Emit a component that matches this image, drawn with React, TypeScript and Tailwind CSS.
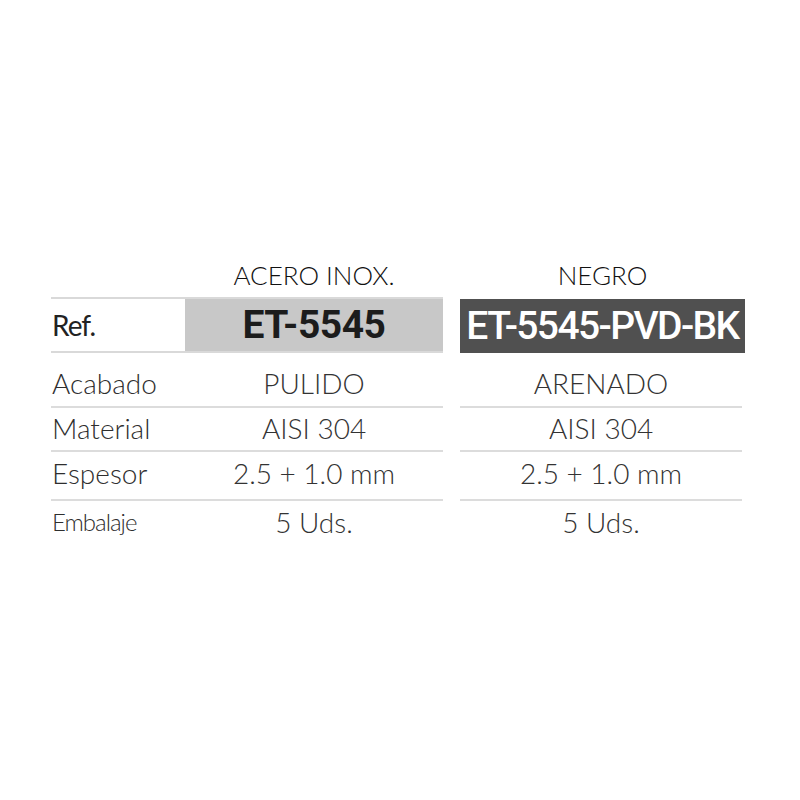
// Ficha técnica: dos columnas (ACERO INOX. / NEGRO) con filas de especificaciones

const rows = [
  { label: "Acabado", left: "PULIDO", right: "ARENADO", h: "h-[55px]", pad: "pt-[6px]", small: false },
  { label: "Material", left: "AISI 304", right: "AISI 304", h: "h-[44px]", pad: "pb-[3px]", small: false },
  { label: "Espesor", left: "2.5 + 1.0 mm", right: "2.5 + 1.0 mm", h: "h-[49px]", pad: "pb-[6px]", small: false },
  { label: "Embalaje", left: "5 Uds.", right: "5 Uds.", h: "h-[49px]", pad: "pb-[8px]", small: true },
];

const thin = { fontFamily: "Lato, 'Noto Sans', sans-serif" };
const cond = { fontFamily: "Roboto, 'Liberation Sans', sans-serif" };

export default function App() {
  return (
    <div className="min-h-[800px] w-[800px] bg-white pt-[262px] pl-[51px]" style={thin}>
      <div className="flex gap-[17px]">
        {/* Tabla izquierda: etiquetas + acero inox */}
        <div className="w-[392px] flex flex-col">
          <div className="h-[35px] flex">
            <div className="w-[134px]" />
            <div className="flex-1 text-center text-[26px] leading-none font-light text-[#111]">
              ACERO INOX.
            </div>
          </div>
          <div className="h-[56px] border-y-2 border-[#d9d9d9] flex">
            <div className="w-[134px] flex items-center text-[28px] leading-none text-[#222] pl-[1px] tracking-[-1px]">
              Ref.
            </div>
            <div
              className="flex-1 bg-[#c8c8c8] flex items-center justify-center text-[39px] leading-none font-bold text-[#1c1c1c] tracking-[-0.5px]"
              style={cond}
            >
              ET-5545
            </div>
          </div>
          {rows.map((r, i) => (
            <div
              key={r.label}
              className={`${r.h} flex items-center ${r.pad} ${i < rows.length - 1 ? "border-b-2 border-[#dcdcdc]" : ""}`}
            >
              <div
                className={`w-[134px] font-light leading-none text-[#2e2e2e] pl-[1px] ${r.small ? "text-[24px] tracking-[-1px]" : "text-[28px]"}`}
              >
                {r.label}
              </div>
              <div className="flex-1 text-center text-[28px] leading-none font-light text-[#333]">
                {r.left}
              </div>
            </div>
          ))}
        </div>

        {/* Tabla derecha: negro */}
        <div className="w-[285px] flex flex-col">
          <div className="h-[35px] text-center text-[26px] leading-none font-light text-[#111]">
            NEGRO
          </div>
          <div className="h-[56px] pt-[2px]">
            <div
              className="h-[54px] bg-[#505050] flex items-center justify-center text-[39px] leading-none font-medium text-white tracking-[-1.6px]"
              style={cond}
            >
              ET-5545-PVD-BK
            </div>
          </div>
          {rows.map((r, i) => (
            <div
              key={r.label}
              className={`${r.h} w-[282px] flex items-center justify-center ${r.pad} text-[28px] leading-none font-light text-[#333] ${i < rows.length - 1 ? "border-b-2 border-[#dcdcdc]" : ""}`}
            >
              {r.right}
            </div>
          ))}
        </div>
      </div>
    </div>
  );
}
